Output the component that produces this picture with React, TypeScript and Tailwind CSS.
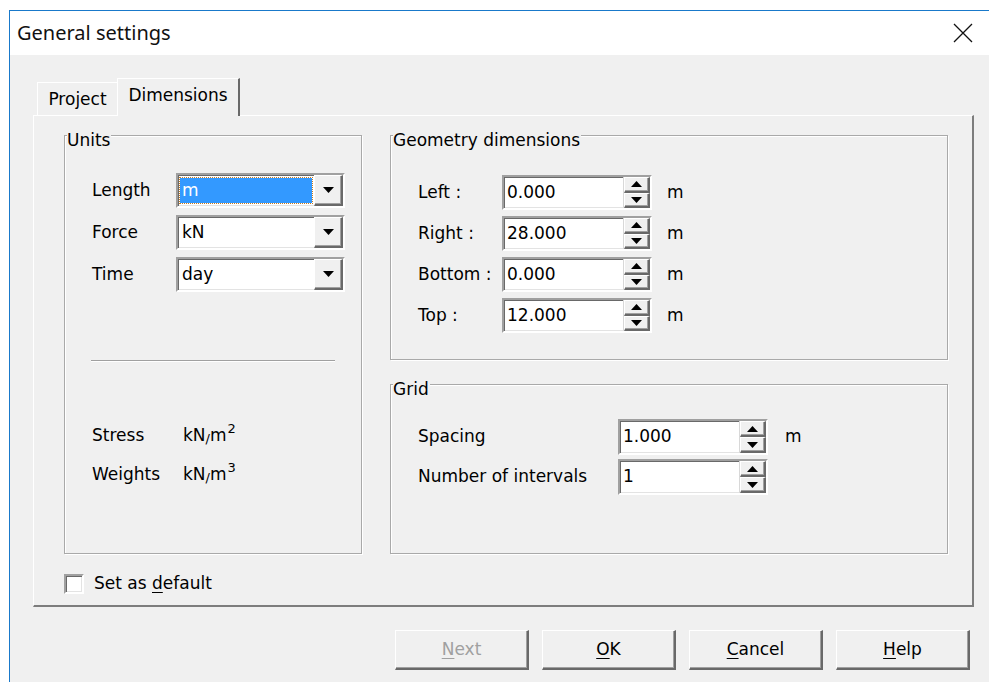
import React from 'react';

const sunken =
  'border-2 border-t-[#a0a0a0] border-l-[#a0a0a0] border-r-white border-b-white shadow-[inset_1px_1px_0_#696969,inset_-1px_-1px_0_#e3e3e3]';
const raised =
  'border-l border-t border-white border-r-2 border-b-2 border-r-[#696969] border-b-[#696969] shadow-[inset_-1px_-1px_0_#a0a0a0]';

function Triangle({ up = false }: { up?: boolean }) {
  return (
    <svg width="11" height="6" viewBox="0 0 11 6">
      {up ? <path d="M0 6 L5.5 0 L11 6 Z" fill="#000" /> : <path d="M0 0 L11 0 L5.5 6 Z" fill="#000" />}
    </svg>
  );
}

function Combo({ value, focused = false }: { value: string; focused?: boolean }) {
  return (
    <div className={`w-[169px] h-[35px] bg-white flex ${sunken}`}>
      <div className="flex-1 flex items-center px-[2px]">
        {focused ? (
          <div className="w-full h-[25px] bg-[#3399ff] text-white flex items-center pl-[2px] outline-1 outline-dotted outline-[#c77b20]">
            {value}
          </div>
        ) : (
          <span className="pl-[2px]">{value}</span>
        )}
      </div>
      <div className={`w-[29px] bg-[#f0f0f0] flex items-center justify-center ${raised}`}>
        <Triangle />
      </div>
    </div>
  );
}

function Spin({ value, h = 35 }: { value: string; h?: number }) {
  return (
    <div className={`w-[150px] ${h === 35 ? 'h-[35px]' : 'h-[36px]'} bg-white flex ${sunken}`}>
      <div className="flex-1 flex items-center pl-[3px]">{value}</div>
      <div className="w-[27px] flex flex-col border-l border-[#d8d8d8]">
        <div className={`flex-1 bg-[#f0f0f0] flex items-center justify-center ${raised}`}>
          <Triangle up />
        </div>
        <div className={`flex-1 bg-[#f0f0f0] flex items-center justify-center ${raised}`}>
          <Triangle />
        </div>
      </div>
    </div>
  );
}

function Group({ title, className, children }: { title: string; className: string; children: React.ReactNode }) {
  return (
    <div className={`relative border border-[#a9a9a9] shadow-[inset_1px_1px_0_#fff,1px_1px_0_#fff] ${className}`}>
      <span className="absolute left-[2px] -top-[6px] bg-[#f0f0f0] pr-[1px] leading-[20px]">{title}</span>
      {children}
    </div>
  );
}

function Button({ accel, rest, disabled = false }: { accel: string; rest: string; disabled?: boolean }) {
  return (
    <button
      className={`w-[134px] h-[40px] bg-[#f0f0f0] flex items-center justify-center ${raised} ${disabled ? 'text-[#a0a0a0]' : 'text-black'}`}
    >
      <span className="underline underline-offset-[3px]">{accel}</span>
      {rest}
    </button>
  );
}

function Unit({ power }: { power: string }) {
  return (
    <span>
      kN<span className="text-[13px] relative top-[2px]">/</span>m
      <sup className="text-[13px] -top-[8px] ml-[1px]">{power}</sup>
    </span>
  );
}

const geometry = [
  ['Left :', '0.000'],
  ['Right :', '28.000'],
  ['Bottom :', '0.000'],
  ['Top :', '12.000'],
];

export default function App() {
  return (
    <div className="w-[989px] h-[682px] overflow-hidden bg-white pl-[9px] pt-[10px] font-['DejaVu_Sans',sans-serif] text-[17px] text-black">
      <div className="h-[672px] border-l border-t border-[#1979ca] flex flex-col">
        {/* title bar */}
        <div className="h-[44px] shrink-0 bg-white flex items-center justify-between pl-[7px] pr-[16px]">
          <span className="font-['Noto_Sans',sans-serif] text-[20px] text-[#111]">General settings</span>
          <svg width="20" height="20" viewBox="0 0 20 20">
            <path d="M1 1 L19 19 M19 1 L1 19" stroke="#111" strokeWidth="1.3" />
          </svg>
        </div>

        <div className="flex-1 bg-[#f0f0f0] pl-[23px] pr-[15px] pt-[23px]">
          {/* tabs */}
          <div className="flex items-end h-[37px] pl-[4px]">
            <div className="h-[33px] w-[80px] border-l border-t border-white bg-[#f0f0f0] flex items-center justify-center pt-[2px]">
              Project
            </div>
            <div className="relative z-10 h-[38px] -mb-px w-[123px] border-l border-t border-white border-r-2 border-r-[#696969] bg-[#f0f0f0] flex items-center justify-center pb-[4px]">
              Dimensions
            </div>
          </div>

          {/* tab page */}
          <div className="h-[492px] border-l border-t border-white border-r-2 border-b-2 border-r-[#7d7d7d] border-b-[#7d7d7d] pl-[30px] pt-[19px]">
            <div className="flex gap-[28px]">
              <Group title="Units" className="w-[298px] h-[419px] pl-[27px] pt-[37px]">
                {[
                  ['Length', 'm', true],
                  ['Force', 'kN', false],
                  ['Time', 'day', false],
                ].map(([label, value, focused]) => (
                  <div key={label as string} className="flex items-center h-[35px] mb-[7px]">
                    <span className="w-[84px]">{label}</span>
                    <Combo value={value as string} focused={focused as boolean} />
                  </div>
                ))}
                <div className="w-[244px] -ml-[1px] mt-[68px] border-t border-[#a0a0a0] border-b border-b-white" />
                <div className="mt-[64px] flex items-center h-[20px]">
                  <span className="w-[91px]">Stress</span>
                  <Unit power="2" />
                </div>
                <div className="mt-[19px] flex items-center h-[20px]">
                  <span className="w-[91px]">Weights</span>
                  <Unit power="3" />
                </div>
              </Group>

              <div className="flex flex-col gap-[24px]">
                <Group title="Geometry dimensions" className="w-[558px] h-[225px] pl-[27px] pt-[39px]">
                  {geometry.map(([label, value]) => (
                    <div key={label} className="flex items-center h-[35px] mb-[6px]">
                      <span className="w-[84px]">{label}</span>
                      <Spin value={value} />
                      <span className="ml-[15px]">m</span>
                    </div>
                  ))}
                </Group>
                <Group title="Grid" className="w-[558px] h-[170px] pl-[27px] pt-[34px]">
                  <div className="flex items-center h-[36px] mb-[4px]">
                    <span className="w-[200px]">Spacing</span>
                    <Spin value="1.000" h={36} />
                    <span className="ml-[17px]">m</span>
                  </div>
                  <div className="flex items-center h-[36px]">
                    <span className="w-[200px]">Number of intervals</span>
                    <Spin value="1" h={36} />
                  </div>
                </Group>
              </div>
            </div>

            <div className="mt-[17px] flex items-center gap-[10px]">
              <div className={`w-[20px] h-[20px] bg-white ${sunken}`} />
              <span>
                Set as <span className="underline underline-offset-[3px]">d</span>efault
              </span>
            </div>
          </div>

          {/* dialog buttons */}
          <div className="mt-[23px] flex justify-end gap-[13px] pr-[4px]">
            <Button accel="N" rest="ext" disabled />
            <Button accel="O" rest="K" />
            <Button accel="C" rest="ancel" />
            <Button accel="H" rest="elp" />
          </div>
        </div>
      </div>
    </div>
  );
}
